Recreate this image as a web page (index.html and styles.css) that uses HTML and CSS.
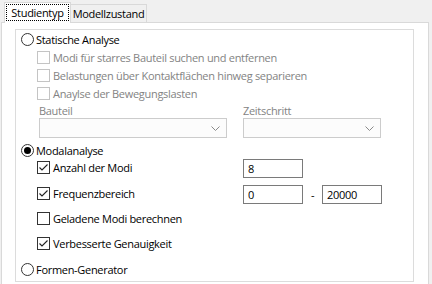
FILE: index.html
```html
<!DOCTYPE html>
<html lang="de">
<head>
    <meta charset="UTF-8">
    <title>Studientyp</title>
    <link rel="stylesheet" href="styles.css">
</head>
<body>
    <div class="tabs">
        <div class="tab active"><span class="focus">Studientyp</span></div>
        <div class="tab">Modellzustand</div>
    </div>
    <div class="page">
        <div class="frame">
            <div class="radio-row">
                <span class="radio"></span>Statische Analyse
            </div>
            <div class="sub">
                <div class="opt disabled"><span class="box"></span>Modi für starres Bauteil suchen und entfernen</div>
                <div class="opt disabled"><span class="box"></span>Belastungen über Kontaktflächen hinweg separieren</div>
                <div class="opt disabled"><span class="box"></span>Anaylse der Bewegungslasten</div>
                <div class="combos">
                    <div class="combo-label">Bauteil</div>
                    <div class="combo-label">Zeitschritt</div>
                    <div class="combo">
                        <svg width="9" height="5" viewBox="0 0 9 5"><polyline points="0.5,0.5 4.5,4.5 8.5,0.5" fill="none" stroke="#8a8a8a" stroke-width="1"/></svg>
                    </div>
                    <div class="combo">
                        <svg width="9" height="5" viewBox="0 0 9 5"><polyline points="0.5,0.5 4.5,4.5 8.5,0.5" fill="none" stroke="#8a8a8a" stroke-width="1"/></svg>
                    </div>
                </div>
            </div>
            <div class="radio-row modal">
                <span class="radio checked"></span>Modalanalyse
            </div>
            <div class="sub">
                <div class="field-row">
                    <div class="opt"><span class="box checked"><svg width="11" height="11" viewBox="0 0 11 11"><polyline points="1.5,5.5 4,8 9.5,2.5" fill="none" stroke="#222" stroke-width="1.1"/></svg></span>Anzahl der Modi</div>
                    <div class="textbox">8</div>
                </div>
                <div class="field-row freq">
                    <div class="opt"><span class="box checked"><svg width="11" height="11" viewBox="0 0 11 11"><polyline points="1.5,5.5 4,8 9.5,2.5" fill="none" stroke="#222" stroke-width="1.1"/></svg></span>Frequenzbereich</div>
                    <div class="textbox">0</div>
                    <div class="dash">-</div>
                    <div class="textbox">20000</div>
                </div>
                <div class="opt loaded"><span class="box"></span>Geladene Modi berechnen</div>
                <div class="opt accurate"><span class="box checked"><svg width="11" height="11" viewBox="0 0 11 11"><polyline points="1.5,5.5 4,8 9.5,2.5" fill="none" stroke="#222" stroke-width="1.1"/></svg></span>Verbesserte Genauigkeit</div>
            </div>
            <div class="radio-row forms">
                <span class="radio"></span>Formen-Generator
            </div>
        </div>
    </div>
</body>
</html>
```

FILE: styles.css
```css
body {
    margin: 0;
    background-color: #f0f0f0;
    font-family: "Open Sans", "Liberation Sans", sans-serif;
    font-size: 11px;
    letter-spacing: -0.3px;
    color: #000;
    overflow: hidden;
    height: 284px;
}

/* tab strip */
.tabs {
    display: flex;
    align-items: flex-end;
    padding: 2px 0 0 4px;
    height: 21px;
    margin-bottom: -1px;
    position: relative;
    z-index: 1;
}

.tab {
    box-sizing: border-box;
    height: 18px;
    width: 76px;
    margin-bottom: 1px;
    border: 1px solid #d9d9d9;
    border-left: none;
    border-bottom: none;
    display: flex;
    align-items: center;
    justify-content: center;
}

.tab.active {
    height: 21px;
    width: 67px;
    margin-bottom: 0;
    border-left: 1px solid #d9d9d9;
    background-color: #fff;
    padding: 1px 1px 2px;
    align-items: stretch;
}

.focus {
    flex: 1;
    border: 1px dotted #000;
    display: flex;
    align-items: center;
    justify-content: center;
}

/* tab page */
.page {
    box-sizing: border-box;
    margin-left: 1px;
    width: 428px;
    height: 262px;
    background-color: #fff;
    border: 1px solid #d9d9d9;
    border-bottom: none;
    padding: 6px 0 0 13px;
}

.frame {
    box-sizing: border-box;
    width: 399px;
    height: 253px;
    border: 1px solid #dcdcdc;
    padding-left: 5px;
}

.radio-row {
    display: flex;
    align-items: center;
    height: 18px;
}

.radio {
    box-sizing: border-box;
    width: 13px;
    height: 13px;
    border: 1px solid #333;
    border-radius: 50%;
    margin-right: 2px;
    display: flex;
    align-items: center;
    justify-content: center;
}

.radio.checked::after {
    content: "";
    width: 7px;
    height: 7px;
    border-radius: 50%;
    background-color: #000;
}

.modal {
    margin-top: 3px;
}

.forms {
    margin-top: 8px;
}

.sub {
    padding-left: 16px;
}

.opt {
    display: flex;
    align-items: center;
    height: 17px;
}

.sub > .opt.disabled {
    height: 18px;
}

.box {
    box-sizing: border-box;
    width: 13px;
    height: 13px;
    border: 1px solid #333;
    background-color: #fff;
    margin-right: 3px;
    display: flex;
    align-items: center;
    justify-content: center;
}

.disabled {
    color: #838383;
}

.disabled .box {
    border-color: #c4c4c4;
}

.loaded {
    margin-top: 6px;
}

.accurate {
    margin-top: 8px;
}

/* combo boxes */
.combos {
    display: grid;
    grid-template-columns: 188px 138px;
    grid-template-rows: 16px 20px;
    column-gap: 16px;
    padding-left: 2px;
}

.combo-label {
    color: #838383;
    display: flex;
    align-items: center;
}

.combo {
    box-sizing: border-box;
    border: 1px solid #cccccc;
    background-color: #fcfcfc;
    display: flex;
    align-items: center;
    justify-content: flex-end;
    padding-right: 6px;
    padding-top: 1px;
}

/* number fields */
.field-row {
    display: grid;
    grid-template-columns: 206px 60px 19px 60px;
    align-items: start;
    height: 19px;
}

.freq {
    margin-top: 7px;
}

.textbox {
    box-sizing: border-box;
    height: 19px;
    border: 1px solid #7a7a7a;
    background-color: #fff;
    padding-left: 4px;
    display: flex;
    align-items: center;
}

.dash {
    height: 19px;
    display: flex;
    align-items: center;
    justify-content: center;
}
```
